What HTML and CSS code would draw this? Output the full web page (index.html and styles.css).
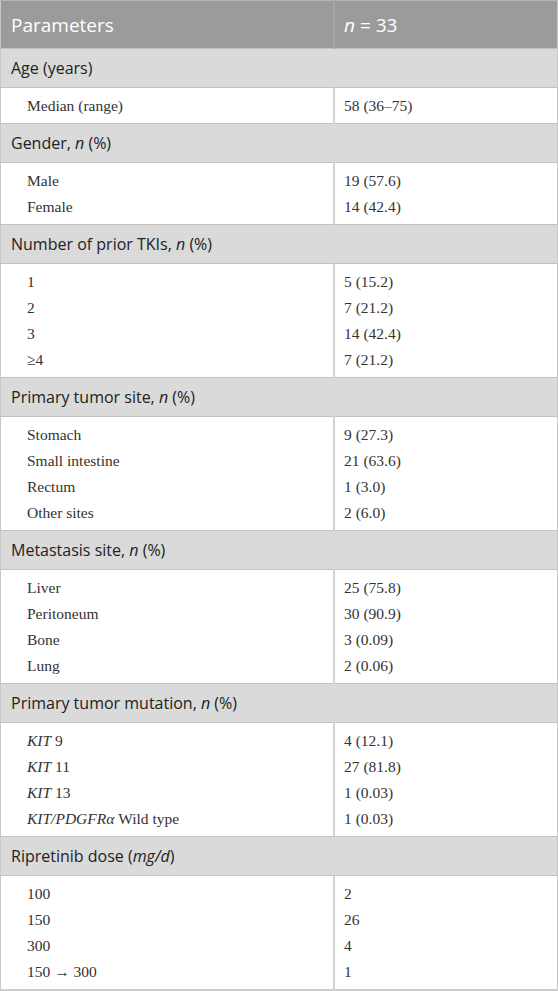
FILE: index.html
```html
<!DOCTYPE html>
<html>
<head>
<meta charset="utf-8">
<link rel="stylesheet" href="styles.css">
</head>
<body>
<table class="tbl">
  <thead>
    <tr class="head">
      <th class="c1">Parameters</th>
      <th class="c2"><i>n</i> = 33</th>
    </tr>
  </thead>
  <tbody>
    <tr class="sec"><td colspan="2">Age (years)</td></tr>
    <tr class="grp">
      <td class="lab"><div>Median (range)</div></td>
      <td class="val"><div>58 (36–75)</div></td>
    </tr>
    <tr class="sec"><td colspan="2">Gender, <i>n</i> (%)</td></tr>
    <tr class="grp">
      <td class="lab"><div>Male</div><div>Female</div></td>
      <td class="val"><div>19 (57.6)</div><div>14 (42.4)</div></td>
    </tr>
    <tr class="sec"><td colspan="2">Number of prior TKIs, <i>n</i> (%)</td></tr>
    <tr class="grp">
      <td class="lab"><div>1</div><div>2</div><div>3</div><div>≥4</div></td>
      <td class="val"><div>5 (15.2)</div><div>7 (21.2)</div><div>14 (42.4)</div><div>7 (21.2)</div></td>
    </tr>
    <tr class="sec"><td colspan="2">Primary tumor site, <i>n</i> (%)</td></tr>
    <tr class="grp">
      <td class="lab"><div>Stomach</div><div>Small intestine</div><div>Rectum</div><div>Other sites</div></td>
      <td class="val"><div>9 (27.3)</div><div>21 (63.6)</div><div>1 (3.0)</div><div>2 (6.0)</div></td>
    </tr>
    <tr class="sec"><td colspan="2">Metastasis site, <i>n</i> (%)</td></tr>
    <tr class="grp">
      <td class="lab"><div>Liver</div><div>Peritoneum</div><div>Bone</div><div>Lung</div></td>
      <td class="val"><div>25 (75.8)</div><div>30 (90.9)</div><div>3 (0.09)</div><div>2 (0.06)</div></td>
    </tr>
    <tr class="sec"><td colspan="2">Primary tumor mutation, <i>n</i> (%)</td></tr>
    <tr class="grp">
      <td class="lab"><div><i>KIT</i> 9</div><div><i>KIT</i> 11</div><div><i>KIT</i> 13</div><div><i>KIT/PDGFRα</i> Wild type</div></td>
      <td class="val"><div>4 (12.1)</div><div>27 (81.8)</div><div>1 (0.03)</div><div>1 (0.03)</div></td>
    </tr>
    <tr class="sec"><td colspan="2">Ripretinib dose (<i>mg/d</i>)</td></tr>
    <tr class="grp">
      <td class="lab"><div>100</div><div>150</div><div>300</div><div>150 → 300</div></td>
      <td class="val"><div>2</div><div>26</div><div>4</div><div>1</div></td>
    </tr>
  </tbody>
</table>
</body>
</html>
```

FILE: styles.css
```css
html, body {
  margin: 0;
  padding: 0;
  background: #ffffff;
}

.tbl {
  width: 558px;
  border-collapse: collapse;
  table-layout: fixed;
  border-left: 1px solid #c8c8c8;
  border-right: 1px solid #c8c8c8;
  border-bottom: 2px solid #cccccc;
}

.tbl td, .tbl th {
  padding: 0;
  vertical-align: top;
}

.head th {
  height: 47px;
  background: #9b9b9b;
  color: #ffffff;
  font-family: "Open Sans", "Liberation Sans", sans-serif;
  font-size: 19px;
  font-weight: 400;
  text-align: left;
  vertical-align: middle;
  border-top: 1px solid #b4b4b4;
}

.head .c1 {
  width: 322px;
  padding-left: 10px;
  border-right: 2px solid #a6a6a6;
}

.head .c2 {
  padding-left: 9px;
}

.sec td {
  height: 38px;
  background: #d9dad9;
  color: #222222;
  font-family: "Open Sans", "Liberation Sans", sans-serif;
  font-size: 16px;
  padding-left: 10px;
  vertical-align: middle;
  border-top: 1px solid #c2c2c2;
  border-bottom: 1px solid #c2c2c2;
}

.grp td {
  font-family: "Liberation Serif", "DejaVu Serif", serif;
  font-size: 15.5px;
  line-height: 26px;
  color: #333333;
  padding-top: 5px;
  padding-bottom: 4px;
}

.grp .lab {
  padding-left: 26px;
  border-right: 2px solid #d2d2d2;
}

.grp .val {
  padding-left: 9px;
}
```
